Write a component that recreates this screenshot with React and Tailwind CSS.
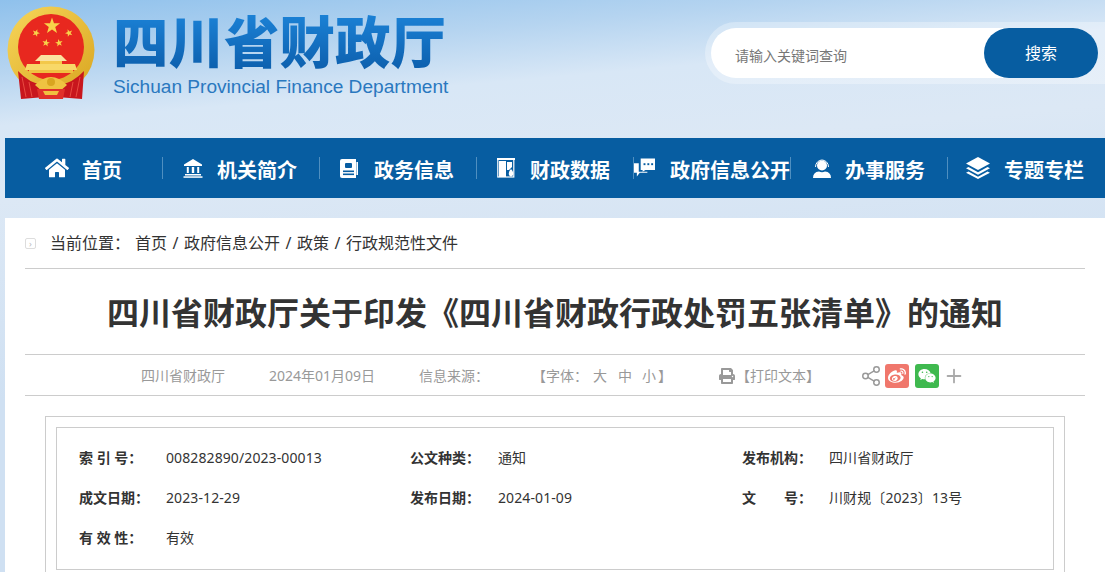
import { FaHome, FaPrint, FaWeibo, FaWeixin } from "react-icons/fa";
import { Plus, Share2 } from "lucide-react";

const Star = ({ x, y, r, rot = 0 }) => {
  const pts = [];
  for (let i = 0; i < 10; i++) {
    const rad = i % 2 === 0 ? r : r * 0.4;
    const a = ((i * 36 + rot - 90) * Math.PI) / 180;
    pts.push(`${x + rad * Math.cos(a)},${y + rad * Math.sin(a)}`);
  }
  return <polygon points={pts.join(" ")} fill="#f8d34a" />;
};

const Emblem = () => (
  <svg width="90" height="100" viewBox="0 0 90 100" className="shrink-0">
    <defs>
      <linearGradient id="ring" x1="0" y1="0" x2="1" y2="1">
        <stop offset="0" stopColor="#f7d65a" />
        <stop offset="1" stopColor="#d9a520" />
      </linearGradient>
    </defs>
    <circle cx="44" cy="45" r="43.5" fill="url(#ring)" />
    <circle cx="44" cy="42" r="33" fill="#e8281f" />
    <Star x={45} y={21} r={8.5} />
    <Star x={29} y={28} r={4} rot={20} />
    <Star x={62} y={28} r={4} rot={-20} />
    <Star x={39} y={38} r={4} rot={10} />
    <Star x={52} y={38} r={4} rot={-10} />
    {/* gate */}
    <path d="M34 50 L54 50 L60 56 L28 56 Z" fill="#fbe3a0" />
    <rect x="33" y="56" width="22" height="3" fill="#f3c84a" />
    <path d="M20 59 L68 59 L70 65 L18 65 Z" fill="#f8d868" />
    <rect x="22" y="65" width="44" height="3" fill="#f0c040" />
    {/* ribbons */}
    <path d="M11 66 Q22 78 36 80 L38 92 L14 94 Z" fill="#c8161d" />
    <path d="M77 66 Q66 78 52 80 L50 92 L75 94 Z" fill="#c8161d" />
    <path d="M15 72 L19 92 M22 77 L25 92 M73 72 L69 92 M66 77 L63 92" stroke="#e84a40" strokeWidth="1" />
    <path d="M28 80 Q44 64 60 80 Q52 88 44 88 Q36 88 28 80 Z" fill="#efc241" />
    <circle cx="44" cy="77" r="4" fill="#d9a520" />
    <path d="M30 84 L58 84 L56 94 L32 94 Z" fill="#e0302a" />
    <path d="M36 86 L52 86 L50 90 L38 90 Z" fill="#f0c040" />
  </svg>
);

const BankIcon = () => (
  <svg width="20" height="20" viewBox="0 0 20 20" fill="white">
    <path d="M10 1 L19 6.5 L19 8 L1 8 L1 6.5 Z" />
    <rect x="8.8" y="9" width="2.4" height="6" />
    <rect x="3.8" y="9" width="2" height="6" />
    <rect x="14.2" y="9" width="2" height="6" />
    <rect x="2" y="16" width="16" height="1.5" />
    <rect x="0.5" y="18.3" width="19" height="1.5" />
  </svg>
);

const DocIcon = () => (
  <svg width="18" height="19" viewBox="0 0 18 19">
    <path d="M2 0 H16 V19 H2 Q0 19 0 17 V2 Q0 0 2 0 Z" fill="white" />
    <rect x="16.4" y="3" width="1.6" height="13" fill="white" />
    <rect x="5" y="4" width="7" height="5" rx="1" fill="#075da1" />
    <rect x="3" y="11.5" width="11" height="1.6" fill="#075da1" />
    <rect x="3" y="14.5" width="11" height="1.6" fill="#075da1" />
  </svg>
);

const DataIcon = () => (
  <svg width="18" height="20" viewBox="0 0 18 20">
    <rect x="0.8" y="1" width="16" height="18" fill="none" stroke="white" strokeWidth="1.2" />
    <rect x="0" y="0" width="18" height="2" fill="white" />
    <rect x="2" y="3" width="7" height="16" fill="white" />
    <path d="M10 4 H15 V9 L12 12 H10 Z" fill="white" />
    <path d="M14 11 Q17 14 16 17 Q14 20 12 17 Q11 14 14 11 Z" fill="white" />
  </svg>
);

const ChatIcon = () => (
  <svg width="22" height="20" viewBox="0 0 22 20" fill="white">
    <path d="M0 5 H5 V14 H14 V15 H6 L3 19 V15 H0 Z" />
    <path d="M7 0 H22 V12 H12 L9 14 V12 H7 Z" />
    <rect x="10" y="5" width="2" height="2" fill="#075da1" />
    <rect x="14" y="5" width="2" height="2" fill="#075da1" />
    <rect x="18" y="5" width="2" height="2" fill="#075da1" />
  </svg>
);

const AgentIcon = () => (
  <svg width="18" height="20" viewBox="0 0 18 20" fill="white">
    <path d="M2.5 9 A6.5 7 0 0 1 15.5 9" fill="none" stroke="white" strokeWidth="1" />
    <circle cx="9" cy="7.5" r="5" />
    <path d="M0 20 Q0 14 6 13.5 Q9 15 12 13.5 Q18 14 18 20 Z" />
  </svg>
);

const LayersIcon = () => (
  <svg width="24" height="22" viewBox="0 0 24 22" fill="white">
    <path d="M12 0 L24 6.5 L12 13 L0 6.5 Z" />
    <path d="M2.5 10 L12 15.2 L21.5 10 L24 11.3 L12 17.8 L0 11.3 Z" />
    <path d="M2.5 14.5 L12 19.7 L21.5 14.5 L24 15.8 L12 22 L0 15.8 Z" />
  </svg>
);

const navItems = [
  { icon: <FaHome size={24} color="white" />, label: "首页", iconX: "pl-[40px]", gap: "gap-[13px]" },
  { icon: <BankIcon />, label: "机关简介", iconX: "pl-[20px]", gap: "gap-[14px]" },
  { icon: <DocIcon />, label: "政务信息", iconX: "pl-[20px]", gap: "gap-[16px]" },
  { icon: <DataIcon />, label: "财政数据", iconX: "pl-[20px]", gap: "gap-[15px]" },
  { icon: <ChatIcon />, label: "政府信息公开", iconX: "pl-0", gap: "gap-[15px]" },
  { icon: <AgentIcon />, label: "办事服务", iconX: "pl-[22px]", gap: "gap-[14px]" },
  { icon: <LayersIcon />, label: "专题专栏", iconX: "pl-[18px]", gap: "gap-[14px]" },
];

const crumbs = ["首页", "政府信息公开", "政策", "行政规范性文件"];

const infoRows = [
  [
    { label: "索 引 号：", value: "008282890/2023-00013" },
    { label: "公文种类：", value: "通知" },
    { label: "发布机构：", value: "四川省财政厅" },
  ],
  [
    { label: "成文日期：", value: "2023-12-29" },
    { label: "发布日期：", value: "2024-01-09" },
    { label: "文　　号：", value: "川财规〔2023〕13号" },
  ],
  [{ label: "有 效 性：", value: "有效" }],
];

export default function App() {
  return (
    <div className="h-screen overflow-hidden bg-[linear-gradient(175deg,#8fc1ec_0px,#b5d4f0_70px,#d8e7f6_125px,#dce8f5_200px,#cfe0f2_400px)] font-['Noto_Sans','Noto_Sans_CJK_SC',sans-serif]">
      {/* HEADER */}
      <header className="h-[138px] flex justify-between">
        <div className="flex pl-[7px] pt-[5px]">
          <Emblem />
          <div className="ml-[16px]">
            <h1 className="text-[55.5px] leading-[78px] -mt-[5px] font-black font-['Noto_Sans_CJK_SC',sans-serif] bg-gradient-to-b from-[#1f8ae0] to-[#0b5ba8] bg-clip-text text-transparent">
              四川省财政厅
            </h1>
            <p className="text-[19.1px] leading-[18px] text-[#2a78bf] font-['Liberation_Sans',sans-serif]">
              Sichuan Provincial Finance Department
            </p>
          </div>
        </div>
        <div className="mt-[22px] h-[62px] w-[400px] rounded-l-full bg-white/30 p-[6px] pr-[7px]">
          <div className="h-[50px] flex items-center justify-between rounded-full bg-white pl-[24px]">
            <span className="text-[14px] text-[#777] pt-[4px]">请输入关键词查询</span>
            <button className="h-[50px] w-[114px] rounded-full bg-[#075da1] text-[16px] text-white">搜索</button>
          </div>
        </div>
      </header>

      {/* NAV */}
      <nav className="ml-[5px] h-[60px] flex items-center bg-[#075da1]">
        {navItems.map((item, i) => (
          <div
            key={i}
            className={`w-[157px] shrink-0 h-[22px] flex items-center ${item.iconX} ${item.gap} ${
              i > 0 ? "border-l border-[#4f8fc0]" : ""
            }`}
          >
            {item.icon}
            <span className="text-[20px] leading-none pt-[3px] font-bold text-white whitespace-nowrap font-['Noto_Sans_CJK_SC',sans-serif]">
              {item.label}
            </span>
          </div>
        ))}
      </nav>

      {/* CONTENT */}
      <main className="ml-[5px] mt-5 bg-white px-5 h-[354px]">
        <div className="h-[51px] flex items-center border-b border-[#ccc] text-[16px] text-[#333]">
          <span className="w-[11px] h-[11px] border border-[#ddd] rounded-[2px] text-[#bbb] text-[9px] leading-[9px] text-center">›</span>
          <span className="ml-[14px]">当前位置：</span>
          <span className="ml-[5px] flex">
            {crumbs.map((crumb, i) => (
              <span key={i}>
                {i > 0 && <span className="mx-[5.5px]">/</span>}
                {crumb}
              </span>
            ))}
          </span>
        </div>

        <h2 className="h-[86px] flex items-center justify-center border-b border-[#ccc] text-[32px] font-bold text-[#333] font-['Noto_Sans_CJK_SC',sans-serif] pb-[2px]">
          四川省财政厅关于印发《四川省财政行政处罚五张清单》的通知
        </h2>

        <div className="h-[41px] flex items-center border-b border-[#ccc] text-[14px] text-[#999] pl-[116px] pt-[1px]">
          <span>四川省财政厅</span>
          <span className="ml-[44px]">2024年01月09日</span>
          <span className="ml-[44px]">信息来源：</span>
          <span className="ml-[43px]">【字体：</span>
          <span className="ml-[5px]">大</span>
          <span className="ml-[11px]">中</span>
          <span className="ml-[10px]">小</span>
          <span className="ml-[2px]">】</span>
          <FaPrint size={16} color="#999" className="ml-[47px]" />
          <span className="ml-[1px]">【打印文本】</span>
          <Share2 size={22} strokeWidth={1.6} color="#999" className="ml-[40px]" />
          <span className="ml-[3px] w-[24px] h-[24px] rounded-[3px] bg-[#f0776c] flex items-center justify-center">
            <FaWeibo size={18} color="white" />
          </span>
          <span className="ml-[6px] w-[24px] h-[24px] rounded-[3px] bg-[#3fb94f] flex items-center justify-center">
            <FaWeixin size={18} color="white" />
          </span>
          <Plus size={22} strokeWidth={2} color="#aaa" className="ml-[4px]" />
        </div>

        <div className="mt-5 mx-5 h-[200px] border border-[#ccc] p-[10px]">
          <div className="h-[143px] border border-[#ccc] pl-[22px] pt-[9px]">
            {infoRows.map((row, i) => (
              <div key={i} className="h-[40px] grid grid-cols-[331px_332px_1fr] items-center text-[14px] text-[#333]">
                {row.map((cell, j) => (
                  <div key={j} className="flex">
                    <span className={`shrink-0 font-bold whitespace-pre ${j === 1 ? "w-[88px]" : "w-[87px]"}`}>{cell.label}</span>
                    <span className="whitespace-nowrap tracking-[0.1px]">{cell.value}</span>
                  </div>
                ))}
              </div>
            ))}
          </div>
        </div>
      </main>
    </div>
  );
}
